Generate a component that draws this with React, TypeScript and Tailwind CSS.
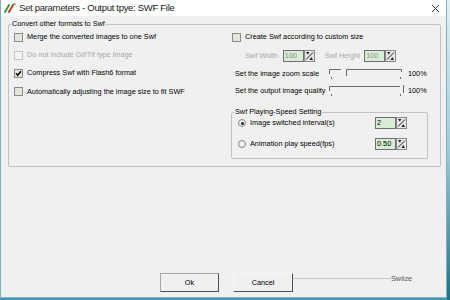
import React from "react";

function CheckBox({ checked = false, disabled = false }: { checked?: boolean; disabled?: boolean }) {
  return (
    <span
      className={`w-[9px] h-[9px] shrink-0 border flex items-center justify-center ${
        disabled ? "border-[#c4c4c4] bg-[#f4f4f4]" : "border-[#8a8a8a] bg-[#dfe8da]"
      }`}
    >
      {checked && (
        <svg width="7" height="7" viewBox="0 0 7 7">
          <path d="M1 3.2 L2.8 5.2 L6 1.2" fill="none" stroke="#111" strokeWidth="1.6" />
        </svg>
      )}
    </span>
  );
}

function Radio({ checked = false }: { checked?: boolean }) {
  return (
    <span className="w-[8px] h-[8px] shrink-0 rounded-full border border-[#8a8a8a] bg-[#eeeeee] flex items-center justify-center">
      {checked && <span className="w-[3px] h-[3px] rounded-full bg-[#222]" />}
    </span>
  );
}

function SpinIcon() {
  return (
    <span className="w-[11px] h-[12px] shrink-0 border border-[#8a8a8a] bg-[#e6e6e6] flex items-center justify-center">
      <svg width="9" height="10" viewBox="0 0 9 10">
        <path d="M1 8.5 L8 1.5" stroke="#222" strokeWidth="1" />
        <path d="M1 1 L4.5 1 L2.75 3.5 Z" fill="#222" />
        <path d="M4.5 9 L8 9 L6.25 6 Z" fill="#222" />
      </svg>
    </span>
  );
}

function SpinBox({ value, disabled = false }: { value: string; disabled?: boolean }) {
  return (
    <div className="flex items-center">
      <span
        className={`w-[21px] h-[12px] border border-[#6f6f6f] bg-[#d8eed4] flex items-center pl-[1px] leading-none ${
          disabled ? "text-[#8f8f8f]" : "text-black"
        }`}
      >
        {value}
      </span>
      <SpinIcon />
    </div>
  );
}

function Slider({ thumb }: { thumb: number }) {
  return (
    <svg width="78" height="14" viewBox="0 0 78 14" className="shrink-0">
      <g stroke="#6a6a6a" strokeWidth="1" fill="none">
        <path d={`M1.5 7 V2.5 H${Math.max(thumb - 5, 2)}`} />
        <path d={`M${thumb + 0.5} 9 V2.5 H73.5 V5`} />
      </g>
      <rect x="3" y="10" width="1" height="2" fill="#6a6a6a" />
      <rect x="72" y="10" width="1" height="2" fill="#6a6a6a" />
    </svg>
  );
}

function Slider2() {
  return (
    <svg width="78" height="14" viewBox="0 0 78 14" className="shrink-0">
      <g stroke="#6a6a6a" strokeWidth="1" fill="none">
        <path d="M1.5 7 V2.5 H72" />
        <path d="M75.5 1 V9" />
      </g>
      <rect x="3" y="10" width="1" height="2" fill="#6a6a6a" />
      <rect x="72" y="10" width="1" height="2" fill="#6a6a6a" />
    </svg>
  );
}

export default function App() {
  return (
    <div className="w-[450px] h-[300px] flex bg-[#4a98b0] overflow-hidden font-['Liberation_Sans',Arial,sans-serif] text-black">
      <div className="w-[447px] h-[298px] shrink-0 flex flex-col bg-[#f0f0f0] border-l border-r border-b border-[#7fb0c0]">
        {/* Title bar */}
        <div className="h-[16px] bg-white flex items-center pl-[3px] pr-[6px]">
          <svg width="12" height="10" viewBox="0 0 12 10">
            <path d="M1 9 L5 2" stroke="#3c9a3c" strokeWidth="2" strokeLinecap="round" />
            <path d="M5 9 L9 2" stroke="#d23a2a" strokeWidth="2" strokeLinecap="round" />
            <path d="M9 2 L11 1" stroke="#3c9a3c" strokeWidth="1.5" strokeLinecap="round" />
          </svg>
          <span className="ml-[3px] text-[9.5px] tracking-[-0.3px] text-[#1a1a1a] leading-none">
            Set parameters - Output tpye: SWF File
          </span>
          <svg width="9" height="9" viewBox="0 0 9 9" className="ml-auto">
            <path d="M1 1 L8 8 M8 1 L1 8" stroke="#333" strokeWidth="1" />
          </svg>
        </div>

        <div className="flex-1 flex flex-col text-[7.3px] leading-none">
          <fieldset className="ml-[7px] mt-[3px] w-[433px] h-[148px] border border-[#c2c2c2] rounded-[2px]">
            <legend className="ml-[2px] px-[1px] leading-[10px]">Convert other formats to Swf</legend>
            <div className="flex -mt-[1px]">
              {/* left column */}
              <div className="w-[223px] pl-[5px] flex flex-col">
                <div className="h-[18px] flex items-center gap-[4px]">
                  <CheckBox />
                  <span>Merge the converted images to one Swf</span>
                </div>
                <div className="h-[18px] flex items-center gap-[4px] text-[#a8a8a8]">
                  <CheckBox disabled />
                  <span>Do not include Gif/Tif type image</span>
                </div>
                <div className="h-[18px] flex items-center gap-[4px]">
                  <CheckBox checked />
                  <span>Compress Swf with Flash6 format</span>
                </div>
                <div className="h-[19px] flex items-center gap-[4px]">
                  <CheckBox />
                  <span>Automatically adjusting the image size to fit SWF</span>
                </div>
              </div>

              {/* right column */}
              <div className="flex-1 flex flex-col">
                <div className="h-[18px] flex items-center gap-[4px]">
                  <CheckBox />
                  <span>Create Swf according to custom size</span>
                </div>
                <div className="h-[19px] flex items-center pl-[13px]">
                  <span className="text-[#a8a8a8]">Swf Width</span>
                  <div className="ml-[5px]">
                    <SpinBox value="100" disabled />
                  </div>
                  <span className="ml-[10px] text-[#a8a8a8]">Swf Height</span>
                  <div className="ml-[4px]">
                    <SpinBox value="100" disabled />
                  </div>
                </div>
                <div className="h-[17px] flex items-center pl-[3px]">
                  <span className="w-[93px]">Set the image zoom scale</span>
                  <Slider thumb={18} />
                  <span className="ml-[2px]">100%</span>
                </div>
                <div className="h-[17px] flex items-center pl-[3px]">
                  <span className="w-[93px]">Set the output image quality</span>
                  <Slider2 />
                  <span className="ml-[2px]">100%</span>
                </div>

                <fieldset className="-ml-[1px] mt-[8px] w-[197px] h-[52px] border border-[#c2c2c2] rounded-[2px]">
                  <legend className="ml-[2px] px-[1px] leading-[10px]">Swf Playing-Speed Setting</legend>
                  <div className="flex flex-col gap-[7px] -mt-[1px] pl-[6px] pr-[20px]">
                    <div className="h-[14px] flex items-center">
                      <Radio checked />
                      <span className="ml-[4px]">Image switched interval(s)</span>
                      <div className="ml-auto">
                        <SpinBox value="2" />
                      </div>
                    </div>
                    <div className="h-[14px] flex items-center">
                      <Radio />
                      <span className="ml-[4px]">Animation play speed(fps)</span>
                      <div className="ml-auto">
                        <SpinBox value="0.50" />
                      </div>
                    </div>
                  </div>
                </fieldset>
              </div>
            </div>
          </fieldset>

          <div className="flex-1" />

          {/* buttons */}
          <div className="flex items-center pl-[159px] mb-[5px]">
            <button className="w-[59px] h-[19px] bg-[#f0f0f0] border border-[#a5a5a5] border-r-[#505050] border-b-[#505050] text-[7.3px]">
              Ok
            </button>
            <button className="ml-[14px] w-[60px] h-[19px] bg-[#f0f0f0] border border-[#f8f8f8] border-r-[#505050] border-b-[#505050] text-[7.3px]">
              Cancel
            </button>
            <div className="w-[98px] h-px bg-[#c6c6c6] -mt-[8px]" />
            <span className="-mt-[8px] text-[#555]">Swiize</span>
          </div>
        </div>
      </div>
      <div className="flex-1 bg-gradient-to-b from-[#e4f1f5] via-[#9fcbd8] to-[#1f6f82]" />
    </div>
  );
}
